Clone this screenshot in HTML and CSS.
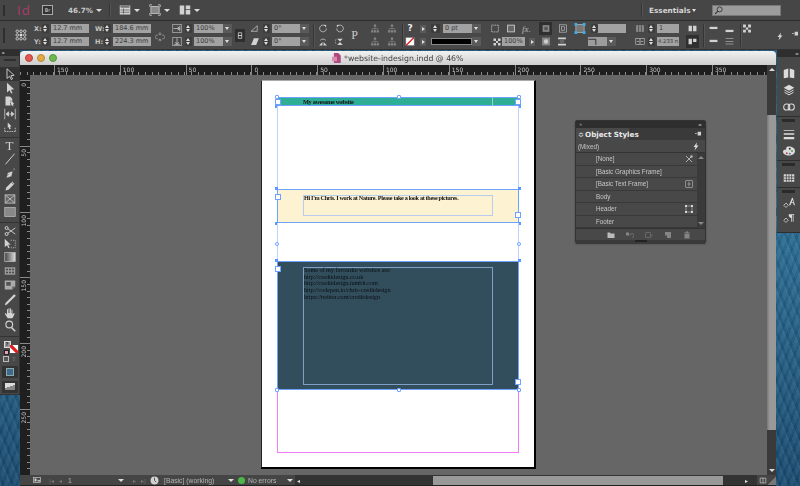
FILE: index.html
```html
<!DOCTYPE html>
<html lang="en">
<head>
    <meta charset="UTF-8">
    <title>*website-indesign.indd @ 46%</title>
    <link rel="stylesheet" href="styles.css">
</head>
<body>
    <svg class="defs" width="0" height="0">
        <symbol id="i-select" viewBox="0 0 16 16"><path d="M4 1v13l3.400-3 2.200 4.400 1.800-.9-2.200-4.300 4.300-.4z" fill="none" stroke="currentColor" stroke-width="1.200"/></symbol>
        <symbol id="i-direct" viewBox="0 0 16 16"><path d="M4 1v13l3.400-3 2.200 4.400 1.800-.9-2.200-4.300 4.300-.4z" fill="currentColor"/></symbol>
        <symbol id="i-page" viewBox="0 0 16 16"><path d="M2 2h6l3 3v5l-3 1 1 3H2z" fill="currentColor"/><path d="M9 7l5 5-2 .5 1 2-1.500.7-1-2-1.500 1z" fill="#ddd" stroke="#444" stroke-width=".5"/></symbol>
        <symbol id="i-gap" viewBox="0 0 16 16"><path d="M1 1v14M15 1v14M3 8h10M3 8l3-3v6zM13 8l-3-3v6z" fill="currentColor" stroke="currentColor"/></symbol>
        <symbol id="i-collect" viewBox="0 0 16 16"><path d="M1 14h14M1 14V9M15 14V9" fill="none" stroke="currentColor" stroke-dasharray="2 1"/><path d="M5 2l5 5-2 .5 1 3-2 .5-1-3-1 1z" fill="currentColor"/></symbol>
        <symbol id="i-line" viewBox="0 0 16 16"><path d="M2 15L14 1" stroke="currentColor" stroke-width="1.300"/></symbol>
        <symbol id="i-pen" viewBox="0 0 16 16"><path d="M13 1l2 2-3 1.500-2 8-7 2 2-7 8-2.500zM3 13l4-4" fill="currentColor" stroke="#444" stroke-width=".5"/></symbol>
        <symbol id="i-pencil" viewBox="0 0 16 16"><path d="M2 14l1-4 8-8 3 3-8 8z" fill="currentColor"/><path d="M10 3l3 3" stroke="#444"/></symbol>
        <symbol id="i-frame" viewBox="0 0 16 16"><rect x="1.500" y="2.500" width="13" height="11" fill="#666" stroke="currentColor"/><path d="M2 3l12 10M14 3L2 13" stroke="currentColor"/></symbol>
        <symbol id="i-rect" viewBox="0 0 16 16"><rect x="1" y="2" width="14" height="12" fill="#888" stroke="#bbb"/></symbol>
        <symbol id="i-scissors" viewBox="0 0 16 16"><circle cx="3.500" cy="4" r="2" fill="none" stroke="currentColor" stroke-width="1.300"/><circle cx="3.500" cy="12" r="2" fill="none" stroke="currentColor" stroke-width="1.300"/><path d="M5 5l10 7M5 11L15 4" stroke="currentColor" stroke-width="1.200"/></symbol>
        <symbol id="i-free" viewBox="0 0 16 16"><path d="M1 1v11l3-2.500 2 4 1.500-.8-2-4L9 9z" fill="currentColor"/><path d="M9 3h6M15 3v10M9 13h6" stroke="currentColor" stroke-dasharray="1.500 1.500"/></symbol>
        <symbol id="i-gradient" viewBox="0 0 16 16"><defs><linearGradient id="grad"><stop offset="0" stop-color="#444"/><stop offset="1" stop-color="#ddd"/></linearGradient></defs><rect x="1" y="2" width="14" height="12" fill="url(#grad)" stroke="#bbb"/></symbol>
        <symbol id="i-feather" viewBox="0 0 16 16"><rect x="1" y="3" width="14" height="10" fill="#999"/><path d="M3 6h2M7 6h2M11 6h2M3 10h2M7 10h2M11 10h2" stroke="#333" stroke-width="2"/></symbol>
        <symbol id="i-note" viewBox="0 0 16 16"><path d="M1 2h14v8l-4 4H1z" fill="#aaa"/><path d="M11 14v-4h4" fill="#666"/><rect x="3" y="4" width="6" height="5" fill="#555"/></symbol>
        <symbol id="i-drop" viewBox="0 0 16 16"><path d="M15 1c-1-1-3 0-4 2L2 12l-1 3 3-1 9-9c2-1 3-3 2-4z" fill="currentColor"/></symbol>
        <symbol id="i-hand" viewBox="0 0 16 16"><path d="M5 15L1 9l1-1 2 2V3h1.300v5H6V1.500h1.300V8H8V2h1.300v6h.7V3.500h1.300V10l2-2 1 1-3 6z" fill="currentColor"/></symbol>
        <symbol id="i-zoom" viewBox="0 0 16 16"><circle cx="7" cy="6" r="4.500" fill="none" stroke="currentColor" stroke-width="1.500"/><path d="M10 10l5 5" stroke="currentColor" stroke-width="2"/></symbol>
        <symbol id="i-pages" viewBox="0 0 16 16"><path d="M1 4l6-2v12l-6 1zM9 2l6 2v11l-6-1z" fill="currentColor"/></symbol>
        <symbol id="i-layers" viewBox="0 0 16 16"><path d="M8 1l7 4-7 4-7-4z" fill="currentColor"/><path d="M2 8l6 3.500L14 8M2 11l6 3.500 6-3.500" fill="none" stroke="currentColor" stroke-width="1.300"/></symbol>
        <symbol id="i-links" viewBox="0 0 16 16"><rect x="1" y="4" width="8" height="8" rx="3.500" fill="none" stroke="currentColor" stroke-width="1.400"/><rect x="7" y="4" width="8" height="8" rx="3.500" fill="none" stroke="currentColor" stroke-width="1.400"/></symbol>
        <symbol id="i-strokes" viewBox="0 0 16 16"><path d="M1 3h14v1H1zM1 7h14v2H1zM1 12h14v3H1z" fill="currentColor"/></symbol>
        <symbol id="i-palette" viewBox="0 0 16 16"><path d="M8 2c4 0 8 2 8 6s-4 6-8 6-8-2-8-5 3-2 4-3-1-4 4-4z" fill="currentColor"/><circle cx="5" cy="11" r="1.300" fill="#b44"/><circle cx="9" cy="11.500" r="1.300" fill="#47a"/><circle cx="12" cy="8" r="1.300" fill="#4a4"/><circle cx="9" cy="5" r="1.300" fill="#333"/></symbol>
        <symbol id="i-table" viewBox="0 0 16 16"><path fill="currentColor" d="M1 3h14v10H1z"/><path d="M1 6.500h14M1 9.800h14M4.500 3v10M8 3v10M11.500 3v10" stroke="#333" stroke-width=".9"/></symbol>
        <symbol id="i-charst" viewBox="0 0 16 16"><path d="M1 11l3-3 3 3-3 3z" fill="none" stroke="currentColor"/><path d="M8 11l4-10h1l3 10h-1.500l-1-3H11l-1 3zM11.500 7H14l-1-3.500z" fill="currentColor"/></symbol>
        <symbol id="i-parast" viewBox="0 0 16 16"><path d="M1 11l3-3 3 3-3 3z" fill="none" stroke="currentColor"/><path d="M8 3h7v1h-1v9h-1V4h-1v9h-1V8C8 8 7 3 8 3z" fill="currentColor"/></symbol>
        <symbol id="i-view" viewBox="0 0 16 16"><rect x="1" y="2" width="14" height="12" fill="currentColor"/><rect x="2" y="2" width="12" height="3" fill="#777"/><path d="M6 6v7M2 8h12M2 11h12" stroke="#555"/></symbol>
        <symbol id="i-screen" viewBox="0 0 16 16"><rect x="2.500" y="3.500" width="11" height="9" fill="#888" stroke="currentColor"/><path d="M1 1h3M1 1v3M15 1h-3M15 1v3M1 15h3M1 15v-3M15 15h-3M15 15v-3" stroke="currentColor" fill="none"/></symbol>
        <symbol id="i-arrange" viewBox="0 0 16 16"><path d="M1 2h6v12H1zM9 2h6v5H9zM9 8h6v6H9z" fill="currentColor"/></symbol>
        <symbol id="i-ref" viewBox="0 0 16 16"><g fill="none" stroke="currentColor" stroke-width="1.200"><circle cx="3" cy="3" r="1.700"/><circle cx="8" cy="3" r="1.700"/><circle cx="13" cy="3" r="1.700"/><circle cx="3" cy="8" r="1.700"/><circle cx="13" cy="8" r="1.700"/><circle cx="3" cy="13" r="1.700"/><circle cx="8" cy="13" r="1.700"/><circle cx="13" cy="13" r="1.700"/></g><circle cx="8" cy="8" r="2" fill="#ddd"/></symbol>
        <symbol id="i-linkv" viewBox="0 0 16 16"><path d="M8 1l2 2-2 2-2-2zM8 11l2 2-2 2-2-2zM4 5a4 3 0 0 0 0 6M12 5a4 3 0 0 1 0 6" fill="none" stroke="currentColor" stroke-width="1.200" stroke-dasharray="2 1"/></symbol>
        <symbol id="i-scalex" viewBox="0 0 16 16"><rect x=".5" y=".5" width="15" height="15" fill="none" stroke="currentColor"/><path d="M2 8h10M9 5l4 3-4 3M13 3v10" fill="none" stroke="currentColor" stroke-width="1.300"/></symbol>
        <symbol id="i-scaley" viewBox="0 0 16 16"><rect x=".5" y=".5" width="15" height="15" fill="none" stroke="currentColor"/><path d="M8 2v10M5 9l3 4 3-4M3 13h10" fill="none" stroke="currentColor" stroke-width="1.300"/></symbol>
        <symbol id="i-chain" viewBox="0 0 16 16"><path d="M5 3h6v5H5zM5 8h6v5H5z" fill="none" stroke="#ddd" stroke-width="1.300"/></symbol>
        <symbol id="i-angle" viewBox="0 0 16 16"><path d="M1 13L12 3v10z" fill="none" stroke="currentColor" stroke-width="1.200"/></symbol>
        <symbol id="i-shear" viewBox="0 0 16 16"><path d="M1 14L6 2h9l-5 12z" fill="currentColor"/></symbol>
        <symbol id="i-rotcw" viewBox="0 0 16 16"><path d="M12 3.500a6 6 0 1 0 2 4.500" fill="none" stroke="currentColor" stroke-width="1.300"/><path d="M10 1l4 1-1 4z" fill="currentColor"/></symbol>
        <symbol id="i-rotccw" viewBox="0 0 16 16"><path d="M4 3.500a6 6 0 1 1-2 4.500" fill="none" stroke="currentColor" stroke-width="1.300"/><path d="M6 1L2 2l1 4z" fill="currentColor"/></symbol>
        <symbol id="i-fliph" viewBox="0 0 16 16"><path d="M3 6a6 5 0 0 1 10 0" fill="none" stroke="currentColor" stroke-width="1.300"/><path d="M1 15l6-6v6zM15 15L9 9v6z" fill="currentColor"/></symbol>
        <symbol id="i-flipv" viewBox="0 0 16 16"><path d="M3 3h10l-5 5zM3 14h10L8 9z" fill="currentColor"/><path d="M1 4a8 6 0 0 0 0 8" fill="none" stroke="currentColor"/></symbol>
        <symbol id="i-tree" viewBox="0 0 16 16"><path d="M6 1h4v4H6zM1 11h4v4H1zM6 11h4v4H6zM11 11h4v4h-4z" fill="currentColor"/><path d="M8 5v6M3 11V8h10v3" fill="none" stroke="currentColor"/></symbol>
        <symbol id="i-none" viewBox="0 0 16 16"><rect width="16" height="16" fill="#fff"/><path d="M1 15L15 1" stroke="#d22" stroke-width="2.500"/><rect x=".5" y=".5" width="15" height="15" fill="none" stroke="#333"/></symbol>
        <symbol id="i-dashed" viewBox="0 0 16 16"><rect x="2" y="2" width="12" height="12" fill="none" stroke="currentColor" stroke-width="1.300" stroke-dasharray="2 1"/></symbol>
        <symbol id="i-square" viewBox="0 0 16 16"><rect x="2" y="2" width="12" height="12" fill="#666" stroke="currentColor" stroke-width="1.500"/></symbol>
        <symbol id="i-check" viewBox="0 0 16 16"><path d="M1 1h5v5H1zM10 1h5v5h-5zM6 6h4v4H6zM1 10h5v5H1zM10 10h5v5h-5z" fill="currentColor"/></symbol>
        <symbol id="i-wrap" viewBox="0 0 16 16"><rect x="2" y="2" width="12" height="12" fill="#888"/><rect x="5" y="5" width="6" height="6" fill="#555"/></symbol>
        <symbol id="i-wrap2" viewBox="0 0 16 16"><rect x="1.500" y="1.500" width="13" height="13" fill="none" stroke="currentColor"/><rect x="5" y="5" width="6" height="6" fill="none" stroke="currentColor"/></symbol>
        <symbol id="i-circ" viewBox="0 0 16 16"><rect x="1" y="1" width="14" height="14" fill="#888"/><circle cx="8" cy="8" r="4" fill="#ccc"/></symbol>
        <symbol id="i-jump" viewBox="0 0 16 16"><path d="M1 1h14v3H1zM1 12h14v3H1z" fill="currentColor"/><path d="M4 5h8v6H4z" fill="#666"/></symbol>
        <symbol id="i-fit" viewBox="0 0 16 16"><rect x="2" y="2" width="12" height="12" fill="#777" stroke="#bbb"/><path d="M0 0h4v4H0zM12 0h4v4h-4zM0 12h4v4H0zM12 12h4v4h-4z" fill="#3ab0e8"/></symbol>
        <symbol id="i-corner" viewBox="0 0 16 16"><path d="M0 4h13v10" fill="none" stroke="#222" stroke-width="1.500"/></symbol>
        <symbol id="i-cols" viewBox="0 0 16 16"><rect x="1" y="2" width="14" height="12" fill="#888"/><path d="M5.500 2v12M10.500 2v12" stroke="#444" stroke-width="1.300"/></symbol>
        <symbol id="i-gutter" viewBox="0 0 16 16"><rect x=".5" y="2.500" width="15" height="11" fill="none" stroke="currentColor"/><path d="M3 8h3M10 8h3M8 3v10" stroke="currentColor" stroke-width="1.300"/></symbol>
        <symbol id="i-twocol" viewBox="0 0 16 16"><path d="M1 3h6v10H1zM9 3h6v10H9z" fill="currentColor"/></symbol>
        <symbol id="i-widecol" viewBox="0 0 16 16"><path d="M1 3h6v10H1zM9 3h6v6H9z" fill="currentColor"/></symbol>
        <symbol id="i-bar" viewBox="0 0 16 16"><path d="M1 5h14v4H1z" fill="currentColor"/></symbol>
        <symbol id="i-lines" viewBox="0 0 16 16"><path d="M1 2h14v1H1zM1 7h14v1H1zM1 12h14v1H1z" fill="currentColor"/></symbol>
        <symbol id="i-bolt" viewBox="0 0 16 16"><path d="M10 0L3 9h4l-2 7 8-10H9z" fill="currentColor"/></symbol>
        <symbol id="i-menu" viewBox="0 0 16 16"><path d="M0 6h5v2H0zM7 2h9v10H7z" fill="currentColor"/></symbol>
        <symbol id="i-obj-none" viewBox="0 0 16 16"><path d="M2 2l12 12M2 14L12 4" stroke="currentColor" stroke-width="1.500"/><path d="M11 1h4v4h-4z" fill="currentColor"/></symbol>
        <symbol id="i-obj-text" viewBox="0 0 16 16"><rect x="1.500" y="1.500" width="13" height="13" fill="none" stroke="currentColor"/><path d="M8 3v10M5 8h6" stroke="currentColor"/></symbol>
        <symbol id="i-obj-frame" viewBox="0 0 16 16"><rect x="2" y="2" width="12" height="12" fill="none" stroke="currentColor"/><path d="M0 0h4v4H0zM12 0h4v4h-4zM0 12h4v4H0zM12 12h4v4h-4z" fill="currentColor"/></symbol>
        <symbol id="i-folder" viewBox="0 0 16 16"><path d="M1 3h5l1 2h8v9H1z" fill="currentColor"/></symbol>
        <symbol id="i-clear" viewBox="0 0 16 16"><path d="M0 3h6v6H0z" fill="currentColor"/><path d="M8 9a4 4 0 1 1 4 4" fill="none" stroke="currentColor" stroke-width="1.300"/></symbol>
        <symbol id="i-newattr" viewBox="0 0 16 16"><rect x="1.500" y="3.500" width="9" height="9" fill="none" stroke="currentColor"/><path d="M12 11l3-4" stroke="currentColor" stroke-width="1.300"/></symbol>
        <symbol id="i-newdoc" viewBox="0 0 16 16"><path d="M2 2h12v12H6V9H2z" fill="currentColor"/></symbol>
        <symbol id="i-trash" viewBox="0 0 16 16"><path d="M2 3h12v1H2zM6 1h4v2H6zM3 5h10v10H3z" fill="currentColor"/></symbol>
        <symbol id="i-preview" viewBox="0 0 16 16"><rect x="1" y="3" width="14" height="10" fill="none" stroke="currentColor" stroke-width="1.300"/><rect x="3" y="5" width="4" height="6" fill="currentColor"/><path d="M9 7l3 2 2-2v4H9z" fill="currentColor"/></symbol>
        <symbol id="i-clock" viewBox="0 0 16 16"><circle cx="8" cy="8" r="7" fill="currentColor"/><path d="M8 3v5l3 3" stroke="#444" stroke-width="1.500" fill="none"/></symbol>
        <symbol id="i-split" viewBox="0 0 16 16"><path d="M1.500 2.500h13v11h-13zM8 2.500v11" fill="none" stroke="currentColor" stroke-width="1.500"/></symbol>
        <symbol id="i-doc" viewBox="0 0 16 16"><path d="M3 0h7l4 4v12H3z" fill="#b04a7e"/><path d="M0 6h8v7H0z" fill="#d88ab0"/></symbol>
        <symbol id="i-search" viewBox="0 0 16 16"><circle cx="10" cy="6" r="4.500" fill="none" stroke="#333" stroke-width="1.500"/><path d="M7 9l-5 5" stroke="#333" stroke-width="2"/></symbol>
    </svg>

    <div class="app">
        <header class="appbar">
            <span class="grip grip-app"></span>
            <span class="logo">Id</span>
            <span class="bridge">Br</span>
            <span class="zoomval">46.7%</span>
            <span class="tri tri-zoom"></span>
            <span class="vline vline-app"></span>
            <svg class="ic-app ic-app-first"><use href="#i-view"/></svg><span class="tri"></span>
            <svg class="ic-app"><use href="#i-screen"/></svg><span class="tri"></span>
            <svg class="ic-app"><use href="#i-arrange"/></svg><span class="tri"></span>
            <span class="vline vline-ess"></span>
            <span class="essentials">Essentials</span>
            <span class="tri tri-ess"></span>
            <span class="searchbox"><svg class="ic"><use href="#i-search"/></svg></span>
        </header>

        <div class="ctl">
            <span class="grip grip-ctl"></span>
            <svg class="refpoint"><use href="#i-ref"/></svg>

            <div class="g g-xy">
                <div class="row"><span class="lbl">X:</span><span class="spin"></span><span class="inp w38">12.7 mm</span></div>
                <div class="row"><span class="lbl">Y:</span><span class="spin"></span><span class="inp w38">12.7 mm</span></div>
            </div>
            <div class="g g-wh">
                <div class="row"><span class="lbl">W:</span><span class="spin"></span><span class="inp w38">184.6 mm</span></div>
                <div class="row"><span class="lbl">H:</span><span class="spin"></span><span class="inp w38">224.3 mm</span></div>
            </div>
            <svg class="linkv"><use href="#i-linkv"/></svg>

            <div class="g g-scale">
                <div class="row"><svg class="ic"><use href="#i-scalex"/></svg><span class="spin spin-gap"></span><span class="inp w29">100%</span><span class="dropbtn"></span></div>
                <div class="row"><svg class="ic"><use href="#i-scaley"/></svg><span class="spin spin-gap"></span><span class="inp w29">100%</span><span class="dropbtn"></span></div>
            </div>
            <span class="chain"><svg class="ic"><use href="#i-chain"/></svg></span>
            <div class="g g-angle">
                <div class="row"><svg class="ic"><use href="#i-angle"/></svg><span class="spin spin-gap"></span><span class="inp w28">0°</span><span class="dropbtn"></span></div>
                <div class="row"><svg class="ic"><use href="#i-shear"/></svg><span class="spin spin-gap"></span><span class="inp w28">0°</span><span class="dropbtn"></span></div>
            </div>
            <span class="vline vline-ctl"></span>

            <div class="g g-icons g-rot">
                <div class="row"><svg class="ic"><use href="#i-rotcw"/></svg><svg class="ic"><use href="#i-rotccw"/></svg></div>
                <div class="row"><svg class="ic"><use href="#i-fliph"/></svg><svg class="ic"><use href="#i-flipv"/></svg></div>
            </div>
            <span class="pbox">P</span>
            <div class="g g-icons g-org">
                <div class="row"><svg class="ic dim"><use href="#i-tree"/></svg><svg class="ic dim"><use href="#i-tree"/></svg></div>
                <div class="row"><svg class="ic dim"><use href="#i-tree"/></svg><svg class="ic dim"><use href="#i-tree"/></svg></div>
            </div>
            <span class="vline vline-stroke"></span>

            <div class="g g-fillst">
                <div class="row"><span class="qmark">?</span><span class="arrowbtn"></span></div>
                <div class="row"><svg class="ic"><use href="#i-none"/></svg><span class="arrowbtn"></span></div>
            </div>
            <div class="g g-stroke">
                <div class="row"><span class="spin"></span><span class="inp w30">0 pt</span><span class="dropbtn"></span></div>
                <div class="row"><span class="strokebar"></span><span class="dropbtn"></span></div>
            </div>
            <div class="g g-fx">
                <div class="row"><svg class="ic"><use href="#i-dashed"/></svg><svg class="ic"><use href="#i-square"/></svg><span class="fx">fx.</span></div>
                <div class="row"><svg class="ic ic-small"><use href="#i-check"/></svg><span class="inp w23">100%</span><span class="arrowbtn"></span></div>
            </div>
            <div class="g g-wrap">
                <div class="row"><span class="pressed"><svg class="ic"><use href="#i-wrap"/></svg></span><svg class="ic"><use href="#i-wrap2"/></svg></div>
                <div class="row"><svg class="ic ic-in"><use href="#i-circ"/></svg><svg class="ic"><use href="#i-jump"/></svg></div>
            </div>
            <div class="g g-fit">
                <div class="row"><svg class="fiticon"><use href="#i-fit"/></svg><span class="spin"></span><span class="inp w29">&nbsp;</span></div>
                <div class="row"><span class="cornerbox"><svg class="ic"><use href="#i-corner"/></svg></span><span class="dropbtn"></span></div>
            </div>
            <div class="g g-cols">
                <div class="row"><svg class="ic"><use href="#i-cols"/></svg><span class="spin spin-gap"></span><span class="inp w22">1</span></div>
                <div class="row"><svg class="ic"><use href="#i-gutter"/></svg><span class="spin spin-gap"></span><span class="inp w22 inp-tiny">4.233 n</span></div>
            </div>
            <div class="g g-flow">
                <div class="row"><svg class="ic"><use href="#i-twocol"/></svg></div>
                <div class="row"><span class="pressed"><svg class="ic"><use href="#i-widecol"/></svg></span></div>
            </div>
            <span class="vline vline-al"></span>
            <div class="g g-align">
                <div class="row"><svg class="ic"><use href="#i-bar"/></svg></div>
                <div class="row"><svg class="ic"><use href="#i-bar"/></svg></div>
            </div>
            <div class="g g-align2">
                <div class="row row-low"><svg class="ic"><use href="#i-bar"/></svg></div>
                <div class="row"><svg class="ic"><use href="#i-lines"/></svg></div>
            </div>
            <span class="vline vline-al2"></span>
            <svg class="ic cell"><use href="#i-check"/></svg>
            <svg class="bolt"><use href="#i-bolt"/></svg>
            <svg class="panelmenu"><use href="#i-menu"/></svg>
        </div>

        <div class="workspace">
            <aside class="tools">
                <div class="tools-head">▸▸</div>
                <span class="tools-grip"></span>
                <div class="tool tool-on"><svg><use href="#i-select"/></svg></div>
                <div class="tool"><svg><use href="#i-direct"/></svg></div>
                <div class="tool"><svg><use href="#i-page"/></svg></div>
                <div class="tool"><svg><use href="#i-gap"/></svg></div>
                <div class="tool tool-end"><svg><use href="#i-collect"/></svg></div>
                <div class="tool tool-t">T</div>
                <div class="tool"><svg><use href="#i-line"/></svg></div>
                <div class="tool"><svg><use href="#i-pen"/></svg></div>
                <div class="tool"><svg><use href="#i-pencil"/></svg></div>
                <div class="tool"><svg><use href="#i-frame"/></svg></div>
                <div class="tool tool-end"><svg><use href="#i-rect"/></svg></div>
                <div class="tool"><svg><use href="#i-scissors"/></svg></div>
                <div class="tool"><svg><use href="#i-free"/></svg></div>
                <div class="tool"><svg><use href="#i-gradient"/></svg></div>
                <div class="tool"><svg><use href="#i-feather"/></svg></div>
                <div class="tool tool-gap"><svg><use href="#i-note"/></svg></div>
                <div class="tool"><svg><use href="#i-drop"/></svg></div>
                <div class="tool"><svg><use href="#i-hand"/></svg></div>
                <div class="tool tool-end"><svg><use href="#i-zoom"/></svg></div>
                <div class="fillstroke">
                    <span class="fs-fill">?</span>
                    <span class="fs-swap"></span>
                    <span class="fs-def"></span>
                </div>
                <div class="modes"><span class="mode-box"></span><span class="mode-t">T</span></div>
                <div class="applybox"><span class="applyfill"></span></div>
                <div class="viewbox"><span class="viewicon"></span></div>
            </aside>

            <main class="docwin">
                <div class="titlebar">
                    <span class="light light-red"></span>
                    <span class="light light-yellow"></span>
                    <span class="light light-green"></span>
                    <span class="doctitle"><svg class="docicon"><use href="#i-doc"/></svg>*website-indesign.indd @ 46%</span>
                </div>

                <div class="toprow">
                    <div class="hruler">
                        <span class="rcorner"></span>
                        <span class="hcell">150</span><span class="hcell">100</span><span class="hcell">50</span><span class="hcell">0</span><span class="hcell">50</span><span class="hcell">100</span><span class="hcell">150</span><span class="hcell">200</span><span class="hcell">250</span><span class="hcell">300</span><span class="hcell">350</span>
                    </div>
                    <div class="vscroll-head"><span class="tri tri-up"></span></div>
                </div>

                <div class="midrow">
                    <div class="vruler">
                        <span class="vcell"><b>0</b></span><span class="vcell"><b>50</b></span><span class="vcell"><b>100</b></span><span class="vcell"><b>150</b></span><span class="vcell"><b>200</b></span><span class="vcell"><b>250</b></span>
                    </div>

                    <div class="canvas">
                        <div class="page">
                            <div class="frame frame-teal">
                                <span class="inner inner-teal">My awesome website</span>
                                <i class="h h-sq h-tl"></i><i class="h h-sq h-tm"></i><i class="h h-sq h-tr"></i>
                                <i class="h h-port h-pl"></i><i class="h h-port h-pr"></i>
                                <i class="h h-dot h-bl"></i><i class="h h-dot h-br"></i>
                            </div>
                            <div class="spacer spacer-1"></div>
                            <div class="frame frame-cream">
                                <div class="inner inner-cream">Hi I'm Chris. I work at Nature. Please take a look at these pictures.</div>
                                <i class="h h-dot h-tl"></i><i class="h h-dot h-tr"></i>
                                <i class="h h-dot h-bl"></i><i class="h h-dot h-br"></i>
                                <i class="h h-in h-cream-in"></i><i class="h h-in h-cream-out"></i>
                            </div>
                            <div class="spacer spacer-2">
                                <i class="h h-sq h-bl2"></i><i class="h h-sq h-br2"></i>
                            </div>
                            <div class="frame frame-dark">
                                <div class="inner inner-dark">
                                    <p>Some of my favourite websites are:</p>
                                    <p>http://creditdesign.co.uk</p>
                                    <p>http://creditdesign.tumblr.com</p>
                                    <p>http://codepen.io/chris-creditdesign</p>
                                    <p>https://twitter.com/creditdesign</p>
                                </div>
                                <i class="h h-dot h-tl"></i><i class="h h-dot h-tr"></i>
                                <i class="h h-in h-dark-in"></i><i class="h h-big h-dark-out"></i>
                                <i class="h h-sq h-bl"></i><i class="h h-sq h-bm"></i><i class="h h-sq h-br"></i>
                            </div>
                            <div class="frame-pink"></div>
                        </div>

                        <section class="panel">
                            <div class="panel-top"><span>✕</span><span>◂▸</span></div>
                            <div class="panel-tabs">
                                <div class="panel-tab"><span class="updown">≎</span>Object Styles</div>
                                <svg class="panel-menu"><use href="#i-menu"/></svg>
                            </div>
                            <div class="panel-mixed"><span>(Mixed)</span><svg class="bolt-small"><use href="#i-bolt"/></svg></div>
                            <div class="panel-list">
                                <ul class="styles">
                                    <li>[None]<svg><use href="#i-obj-none"/></svg></li>
                                    <li>[Basic Graphics Frame]</li>
                                    <li>[Basic Text Frame]<svg><use href="#i-obj-text"/></svg></li>
                                    <li>Body</li>
                                    <li>Header<svg><use href="#i-obj-frame"/></svg></li>
                                    <li>Footer</li>
                                </ul>
                                <div class="panel-scroll"><span class="tri tri-up tri-dim"></span><span class="tri tri-dim"></span></div>
                            </div>
                            <div class="panel-foot">
                                <svg class="pf-folder"><use href="#i-folder"/></svg>
                                <svg class="dim"><use href="#i-clear"/></svg>
                                <svg class="dim"><use href="#i-newattr"/></svg>
                                <svg class="dim"><use href="#i-newdoc"/></svg>
                                <svg class="dim"><use href="#i-trash"/></svg>
                            </div>
                            <div class="panel-grip"><span></span></div>
                        </section>
                    </div>

                    <div class="vscroll">
                        <span class="vthumb"></span>
                        <span class="tri tri-vend"></span>
                    </div>
                </div>

                <footer class="status">
                    <svg class="st-preview"><use href="#i-preview"/></svg>
                    <span class="st-nav">|◂</span><span class="st-nav">◂</span>
                    <span class="st-page">1</span>
                    <span class="tri tri-page"></span>
                    <span class="st-nav">▸</span><span class="st-nav">▸|</span>
                    <svg class="st-clock"><use href="#i-clock"/></svg>
                    <span class="st-prof">[Basic] (working)</span>
                    <span class="tri tri-prof"></span>
                    <span class="st-dot"></span>
                    <span class="st-err">No errors</span>
                    <span class="tri tri-err"></span>
                    <div class="hscroll">
                        <span class="st-left">◂</span>
                        <span class="hthumb"></span>
                        <span class="st-right">▸</span>
                    </div>
                    <svg class="st-split"><use href="#i-split"/></svg>
                    <span class="st-resize"></span>
                </footer>
            </main>

            <aside class="dock">
                <div class="dock-head">◂▸</div>
                <div class="dock-group dock-g1">
                    <svg><use href="#i-pages"/></svg>
                    <svg><use href="#i-layers"/></svg>
                    <svg><use href="#i-links"/></svg>
                </div>
                <div class="dock-group">
                    <span class="dock-bar"></span>
                    <svg><use href="#i-strokes"/></svg>
                    <svg><use href="#i-palette"/></svg>
                </div>
                <div class="dock-group">
                    <span class="dock-bar"></span>
                    <svg><use href="#i-table"/></svg>
                </div>
                <div class="dock-group dock-g4">
                    <span class="dock-bar"></span>
                    <svg><use href="#i-charst"/></svg>
                    <svg><use href="#i-parast"/></svg>
                </div>
            </aside>
        </div>
    </div>
</body>
</html>
```

FILE: styles.css
```css
* { box-sizing: border-box; }
html, body { margin: 0; height: 100%; }
body {
    overflow: hidden;
    font-family: "DejaVu Sans", sans-serif;
    background-color: #1d587f;
    background-image:
        repeating-linear-gradient(68deg, rgba(255,255,255,.05) 0 2px, rgba(0,0,0,.07) 2px 5px, rgba(255,255,255,.02) 5px 9px),
        repeating-linear-gradient(112deg, rgba(0,0,0,.06) 0 3px, rgba(255,255,255,.03) 3px 7px),
        linear-gradient(180deg, #1c5378 0%, #2a6c93 50%, #1b4d72 100%);
    color: #ccc;
}
.defs { position: absolute; }
/* the reference is a soft, scaled down capture */
.app { display: flex; flex-direction: column; height: 486px; filter: blur(.3px); }
svg { display: block; color: #d2d2d2; flex: none; }
.dim { color: #858585; }

/* shared little bits */
.tri {
    flex: none;
    width: 0;
    height: 0;
    margin-left: 3px;
    border-left: 3px solid transparent;
    border-right: 3px solid transparent;
    border-top: 3px solid #ddd;
}
.tri-up { border-top: 0; border-bottom: 3px solid #ddd; }
.tri-dim { border-top-color: #888; border-bottom-color: #888; }
.vline { flex: none; width: 1px; background: #353535; box-shadow: 1px 0 0 #555; }
.grip { flex: none; width: 2px; background: #2e2e2e; }

/* app bar */
.appbar {
    display: flex;
    align-items: center;
    height: 21px;
    background: #464646;
    border-bottom: 1px solid #2d2d2d;
    flex: none;
}
.grip-app { height: 11px; margin-left: 3px; }
.logo { margin-left: 12px; width: 25px; color: #b03a68; font: 13px "Open Sans", sans-serif; letter-spacing: 1px; }
.bridge {
    width: 11px;
    height: 10px;
    background: #333;
    border: 1px solid #aaa;
    color: #ddd;
    font-size: 5px;
    line-height: 8px;
    text-align: center;
}
.zoomval { margin-left: 15px; width: 28px; color: #c9c9c9; font-size: 7.2px; font-weight: bold; }
.tri-zoom { margin-left: 0; }
.vline-app { height: 14px; margin-left: 7px; }
.ic-app { width: 12px; height: 12px; margin-left: 9px; }
.ic-app-first { margin-left: 9px; }
.vline-ess { height: 14px; margin-left: 441px; }
.essentials { margin-left: 7px; width: 41px; color: #d6d6d6; font-size: 7.3px; font-weight: bold; white-space: nowrap; }
.tri-ess { margin-left: 2px; border-left-width: 2px; border-right-width: 2px; }
.searchbox {
    display: flex;
    align-items: center;
    width: 69px;
    height: 11px;
    margin-left: 16px;
    padding-left: 1px;
    background: #9c9c9c;
    border: 1px solid #777;
}
.searchbox .ic { width: 9px; height: 9px; }

/* control bar */
.ctl {
    display: flex;
    align-items: flex-start;
    flex: none;
    height: 29px;
    padding-top: 3px;
    background: #484848;
    border-bottom: 1px solid #333;
    font-size: 6.5px;
}
.g { display: flex; flex-direction: column; gap: 4px; flex: none; }
.row { display: flex; align-items: center; height: 9px; }
.lbl { width: 9px; color: #c4c4c4; font-size: 6.5px; font-weight: bold; }
.spin {
    position: relative;
    flex: none;
    width: 7px;
    height: 9px;
    margin-right: 2px;
    background: #3c3c3c;
    border-radius: 1px;
}
.spin::before, .spin::after {
    content: "";
    position: absolute;
    left: 1px;
    border-left: 2.5px solid transparent;
    border-right: 2.5px solid transparent;
}
.spin::before { top: 1px; border-bottom: 3px solid #ddd; }
.spin::after { bottom: 1px; border-top: 3px solid #ddd; }
.spin-gap { margin-left: 3px; }
.inp {
    flex: none;
    height: 9px;
    padding-left: 2px;
    background: #a2a2a2;
    color: #3c3c3c;
    font-size: 6.5px;
    line-height: 9px;
    white-space: nowrap;
    overflow: hidden;
}
.inp-tiny { padding-left: 1px; font-size: 5.3px; }
.w38 { width: 38px; }
.w30 { width: 29px; }
.w29 { width: 29px; }
.w28 { width: 28px; }
.w23 { width: 23px; }
.w22 { width: 22px; }
.ic { width: 10px; height: 9px; }
.dropbtn {
    position: relative;
    flex: none;
    width: 9px;
    height: 9px;
    background: #5a5a5a;
}
.dropbtn::after {
    content: "";
    position: absolute;
    left: 2px;
    top: 3px;
    border-left: 2.5px solid transparent;
    border-right: 2.5px solid transparent;
    border-top: 3px solid #ddd;
}
.arrowbtn {
    position: relative;
    flex: none;
    width: 6px;
    height: 8px;
    margin-left: 5px;
    background: #5a5a5a;
}
.arrowbtn::after {
    content: "";
    position: absolute;
    left: 2px;
    top: 2px;
    border-top: 2px solid transparent;
    border-bottom: 2px solid transparent;
    border-left: 3px solid #ddd;
}
.grip-ctl { height: 15px; margin: 4px 0 0 3px; }
.refpoint { width: 12px; height: 14px; margin: 4px 0 0 10px; }
.g-xy { margin-left: 7px; width: 55px; }
.g-wh { margin-left: 6px; width: 56px; }
.linkv { width: 10px; height: 10px; margin: 8px 0 0 4px; }
.g-scale { margin-left: 7px; width: 59px; }
.chain {
    display: flex;
    align-items: center;
    width: 10px;
    height: 13px;
    margin: 5px 0 0 4px;
    background: #2f2f2f;
}
.g-angle { margin-left: 5px; width: 57px; }
.vline-ctl { height: 23px; margin-left: 6px; }
.g-icons .row { gap: 7px; }
.g-rot { margin-left: 4px; width: 27px; }
.pbox {
    width: 15px;
    height: 19px;
    margin: 2px 0 0 2px;
    color: #ccc;
    font: 12px/18px "Liberation Serif", serif;
    text-align: center;
}
.g-org { margin-left: 8px; width: 27px; }
.vline-stroke { height: 23px; margin-left: 5px; }
.g-fillst { margin-left: 2px; width: 24px; }
.qmark {
    width: 10px;
    height: 9px;
    color: #eee;
    font-size: 9px;
    font-weight: bold;
    line-height: 9px;
    text-align: center;
}
.g-stroke { margin-left: 2px; width: 50px; }
.g-stroke .spin { width: 9px; margin-right: 3px; }
.g-stroke .spin::before, .g-stroke .spin::after { left: 2px; }
.strokebar { width: 41px; height: 7px; background: #000; border: 1px solid #888; }
.g-fx { margin-left: 9px; width: 46px; }
.g-fx .row { gap: 6px; }
.g-fx .row + .row { gap: 1px; padding-left: 3px; }
.g-fx .arrowbtn { margin-left: 3px; }
.ic-small { width: 8px; height: 8px; }
.fx { color: #bbb; font: italic 9px "Liberation Serif", serif; }
.g-wrap { margin-left: 3px; width: 33px; }
.g-wrap .row { gap: 6px; }
.pressed {
    display: flex;
    align-items: center;
    justify-content: center;
    width: 13px;
    height: 13px;
    background: #2f2f2f;
}
.ic-in { margin-left: 2px; }
.g-fit { margin-left: 2px; width: 52px; }
.fiticon { width: 12px; height: 11px; margin-right: 5px; }
.g-fit .spin { margin-right: -1px; }
.cornerbox {
    width: 19px;
    height: 9px;
    margin-left: 14px;
    background: #9c9c9c;
}
.g-cols { margin-left: 9px; width: 44px; }
.g-flow { margin-left: 7px; width: 14px; }
.g-flow .ic { width: 13px; }
.vline-al { height: 23px; margin-left: 3px; }
.g-align { margin-left: 3px; width: 13px; }
.g-align .ic, .g-align2 .ic { width: 13px; }
.g-align2 { margin-left: 3px; width: 13px; }
.row-low { padding-top: 6px; }
.vline-al2 { height: 23px; margin-left: 4px; }
.cell { width: 10px; height: 9px; margin-left: 1px; }
.bolt { width: 8px; height: 13px; margin: 6px 0 0 24px; }
.panelmenu { width: 10px; height: 6px; margin: 7px 0 0 6px; }

/* workspace */
.workspace { display: flex; flex: 1; min-height: 0; }

/* tools, left */
.tools {
    display: flex;
    flex-direction: column;
    align-items: center;
    align-self: flex-start;
    width: 20px;
    height: 345px;
    flex: none;
    background: #484848;
    border-right: 1px solid #333;
    border-bottom: 1px solid #333;
}
.tools-head {
    width: 100%;
    height: 6px;
    padding-left: 2px;
    background: #2e2e2e;
    color: #aaa;
    font-size: 4px;
    line-height: 6px;
    letter-spacing: -1px;
}
.tools-grip { width: 12px; height: 2px; margin: 3px 0 6px; background: #2e2e2e; }
.tool {
    display: flex;
    align-items: center;
    justify-content: center;
    flex: none;
    width: 100%;
    height: 13.2px;
}
.tool svg { width: 12px; height: 12px; }
.tool-on { background: #333; height: 14px; }
.tool-end { height: 17px; padding-bottom: 4px; border-bottom: 1px solid #333; margin-bottom: 2px; }
.tool-t { color: #d2d2d2; font: 13px "Liberation Serif", serif; }
.tool-gap { height: 16px; }
.fillstroke { position: relative; width: 16px; height: 15px; margin-top: 1px; flex: none; }
.fs-fill {
    position: absolute;
    left: 2px;
    top: 1px;
    width: 7px;
    height: 7px;
    background: #999;
    border: 1px solid #ddd;
    color: #222;
    font-size: 5px;
    font-weight: bold;
    line-height: 5px;
    text-align: center;
}
.fs-swap {
    position: absolute;
    left: 8px;
    top: 5px;
    width: 8px;
    height: 8px;
    background: linear-gradient(135deg, transparent 36%, #e02020 38% 62%, transparent 64%), #fff;
    transform: rotate(90deg);
}
.fs-def {
    position: absolute;
    left: 2px;
    top: 10px;
    width: 5px;
    height: 5px;
    background: #e8a0b8;
    border: 1px solid #222;
}
.modes { display: flex; gap: 3px; align-items: center; height: 9px; flex: none; }
.mode-box { width: 6px; height: 6px; border: 1px solid #bbb; background: #555; }
.mode-t { color: #777; font: 7px "Liberation Serif", serif; }
.applybox {
    display: flex;
    align-items: center;
    justify-content: center;
    width: 16px;
    height: 12px;
    margin-top: 2px;
    background: #333;
    flex: none;
}
.applyfill { width: 8px; height: 8px; background: #3f6a8c; border: 1px solid #8aa; }
.viewbox {
    display: flex;
    align-items: center;
    justify-content: center;
    width: 16px;
    height: 12px;
    margin-top: 3px;
    background: #333;
    flex: none;
}
.viewicon { width: 10px; height: 7px; background: linear-gradient(160deg, #ddd 50%, #888 50%); }

/* document window */
.docwin {
    display: flex;
    flex-direction: column;
    width: 756px;
    flex: none;
    margin-top: 1px;
}
.titlebar {
    display: flex;
    align-items: center;
    flex: none;
    height: 14px;
    padding-left: 5px;
    background: linear-gradient(#f2f2f2, #cfcfcf);
    border-radius: 4px 4px 0 0;
}
.light { width: 8px; height: 8px; margin-right: 4px; border-radius: 50%; flex: none; }
.light-red { background: #e2574f; border: 1px solid #b8403a; }
.light-yellow { background: #e3a944; border: 1px solid #b88930; }
.light-green { background: #6fb84f; border: 1px solid #55943b; }
.doctitle {
    display: flex;
    align-items: center;
    margin-left: 271px;
    color: #444;
    font-size: 7.8px;
    white-space: nowrap;
}
.docicon { width: 10px; height: 10px; margin-right: 2px; }

.toprow { display: flex; flex: none; height: 10px; }
.hruler {
    display: flex;
    flex: 1;
    background:
        repeating-linear-gradient(90deg, #8a8a8a 0 1px, transparent 1px 6.58px) 0 7px / auto 3px no-repeat,
        #1f1f1f;
    overflow: hidden;
}
.rcorner { flex: none; width: 34px; }
.hcell {
    flex: none;
    width: 65.8px;
    padding: 1px 0 0 2px;
    border-left: 1px solid #888;
    color: #c4c4c4;
    font-size: 6px;
    line-height: 7px;
}
.vscroll-head {
    display: flex;
    justify-content: center;
    width: 9px;
    padding-top: 3px;
    background: #3a3a3a;
    flex: none;
}
.vscroll-head .tri { margin: 0; }

.midrow { display: flex; flex: 1; min-height: 0; }
.vruler {
    display: flex;
    flex-direction: column;
    flex: none;
    width: 10px;
    padding-top: 5px;
    background:
        repeating-linear-gradient(180deg, #8a8a8a 0 1px, transparent 1px 6.58px) right 0 top 5px / 3px 100% no-repeat,
        #1f1f1f;
    overflow: hidden;
}
.vcell {
    display: block;
    flex: none;
    height: 65.8px;
    border-top: 1px solid #888;
    color: #c4c4c4;
    font-size: 6px;
}
.vcell b {
    display: block;
    font-weight: normal;
    line-height: 7px;
    writing-mode: vertical-rl;
    transform: rotate(180deg);
    padding-bottom: 2px;
}

/* canvas and page */
.canvas {
    position: relative;
    flex: 1;
    background: #666;
    overflow: hidden;
}
.page {
    display: flex;
    flex-direction: column;
    width: 275px;
    height: 389px;
    margin: 5px 0 0 231px;
    padding: 16px 0 0 15px;
    background: #fff;
    border-top: 1px solid #aaa;
    border-left: 1px solid #222;
    border-right: 2px solid #000;
    border-bottom: 2px solid #000;
}
.frame { position: relative; flex: none; width: 242px; border: 1px solid #6ea2ff; }
.frame-teal { height: 9px; background: #2fae96; }
.frame-cream { height: 34px; background: #fdf3d3; }
.frame-dark { height: 129px; background: #324e5d; }
.frame-pink {
    flex: none;
    width: 242px;
    height: 63px;
    border: 1px solid #f07cf5;
    border-top: 0;
}
.spacer { position: relative; flex: none; width: 242px; border-left: 1px solid #bcd3ff; border-right: 1px solid #bcd3ff; }
.spacer-1 { height: 83px; }
.spacer-2 { height: 38px; }

.inner {
    position: absolute;
    left: 25px;
    width: 190px;
    color: #111;
    font-family: "Liberation Serif", serif;
    white-space: nowrap;
}
.inner-teal {
    top: -1px;
    height: 9px;
    border-right: 1px solid #8fd4c6;
    font-size: 6.3px;
    font-weight: bold;
    letter-spacing: -.33px;
    line-height: 9px;
}
.inner-cream {
    top: 5px;
    height: 21px;
    border: 1px solid #b8cdee;
    font-size: 6.2px;
    font-weight: bold;
    letter-spacing: -.33px;
    line-height: 4px;
}
.inner-dark {
    top: 5px;
    height: 118px;
    border: 1px solid #7f9fc4;
    color: #0b0f12;
    font-size: 6.3px;
    letter-spacing: -.08px;
    line-height: 6.65px;
}
.inner-dark p { margin: 0; }
.inner-dark p:first-child { margin-top: -1px; }

/* frame handles */
.h { position: absolute; display: block; background: #fff; border: 1px solid #6ea2ff; }
.h-sq { width: 4px; height: 4px; border-radius: 1px; }
.h-dot { width: 3px; height: 3px; background: #5e96ff; border: 0; }
.h-port { width: 6px; height: 6px; top: 1px; }
.h-in { width: 6px; height: 6px; }
.h-big { width: 6px; height: 6px; }
.h-tl { left: -3px; top: -3px; }
.h-tm { left: 119px; top: -3px; }
.h-tr { right: -3px; top: -3px; }
.h-bl { left: -3px; bottom: -3px; }
.h-bm { left: 119px; bottom: -3px; }
.h-br { right: -3px; bottom: -3px; }
.h-pl { left: -3px; }
.h-pr { right: -3px; }
.h-bl2 { left: -3px; top: 19px; border-radius: 50%; }
.h-br2 { right: -3px; top: 19px; border-radius: 50%; }
.h-cream-in { left: -3px; top: 4px; }
.h-cream-out { right: -3px; bottom: 4px; }
.h-dark-in { left: -3px; top: 4px; }
.h-dark-out { right: -3px; bottom: 4px; }

/* object styles panel */
.panel {
    position: absolute;
    left: 545px;
    top: 45px;
    display: flex;
    flex-direction: column;
    width: 131px;
    height: 123px;
    background: #484848;
    border: 1px solid #333;
    border-radius: 2px;
    box-shadow: 0 1px 2px rgba(0,0,0,.4);
    font: 6.3px "Liberation Sans", sans-serif;
    color: #c8c8c8;
}
.panel-top {
    display: flex;
    justify-content: space-between;
    flex: none;
    height: 7px;
    padding: 0 3px;
    background: #2e2e2e;
    color: #aaa;
    font-size: 4px;
    line-height: 7px;
}
.panel-tabs {
    display: flex;
    align-items: center;
    justify-content: space-between;
    flex: none;
    height: 12px;
    padding-right: 2px;
    background: #3a3a3a;
}
.panel-tab {
    display: flex;
    align-items: center;
    width: 53px;
    height: 12px;
    padding-left: 2px;
    background: #4a4a4a;
    color: #e8e8e8;
    font: bold 7.2px "DejaVu Sans", sans-serif;
    white-space: nowrap;
}
.updown { margin-right: 1px; font-weight: normal; }
.panel-menu { width: 10px; height: 6px; }
.panel-mixed {
    display: flex;
    align-items: center;
    justify-content: space-between;
    flex: none;
    height: 13px;
    padding: 0 5px 0 2px;
    border-bottom: 1px solid #333;
}
.bolt-small { width: 8px; height: 11px; color: #ddd; }
.panel-list { display: flex; flex: none; height: 75px; }
.styles { flex: 1; margin: 0; padding: 0; list-style: none; }
.styles li {
    display: flex;
    align-items: center;
    justify-content: space-between;
    height: 12.5px;
    padding: 0 4px 0 20px;
    border-bottom: 1px solid #383838;
    white-space: nowrap;
}
.styles svg { width: 8px; height: 8px; }
.panel-scroll {
    display: flex;
    flex-direction: column;
    align-items: center;
    justify-content: space-between;
    width: 8px;
    padding: 3px 0;
    background: #3a3a3a;
}
.panel-scroll .tri { margin: 0; }
.panel-foot {
    display: flex;
    align-items: center;
    flex: none;
    gap: 11px;
    height: 12px;
    padding-left: 31px;
    border-top: 1px solid #333;
}
.panel-foot svg { width: 8px; height: 8px; }
.pf-folder { color: #bbb; }
.panel-grip {
    display: flex;
    justify-content: center;
    flex: none;
    height: 4px;
    background: #3a3a3a;
}
.panel-grip span { width: 12px; height: 2px; background: #222; }

/* scrollbars */
.vscroll {
    display: flex;
    flex-direction: column;
    align-items: center;
    flex: none;
    width: 9px;
    padding-top: 40px;
    background: #3a3a3a;
}
.vthumb {
    width: 100%;
    height: 315px;
    background: linear-gradient(90deg, #777, #999 30%);
}
.tri-vend { margin: auto 0 3px; }

/* status bar */
.status {
    display: flex;
    align-items: center;
    flex: none;
    height: 11px;
    background: #454545;
    border-bottom: 1px solid #222;
    color: #b4b4b4;
    font: 6.8px "Liberation Sans", sans-serif;
}
.st-preview { width: 12px; height: 8px; margin-left: 11px; }
.st-nav { width: 9px; color: #777; font-size: 6px; text-align: center; }
.st-nav:first-of-type { margin-left: 4px; }
.st-page { margin-left: 3px; width: 4px; }
.tri-page { margin: 0 6px 0 46px; }
.st-clock { width: 9px; height: 9px; margin-left: 2px; }
.st-prof { margin-left: 5px; width: 64px; white-space: nowrap; }
.tri-prof { margin-left: 0; }
.st-dot { width: 7px; height: 7px; margin-left: 4px; border-radius: 50%; background: #4cb648; }
.st-err { margin-left: 3px; width: 39px; white-space: nowrap; }
.tri-err { margin-left: 0; }
.hscroll {
    display: flex;
    flex: 1;
    align-items: center;
    height: 10px;
    margin-left: 2px;
    background: #333;
}
.st-left { width: 138px; padding-left: 2px; color: #ddd; font-size: 6px; }
.hthumb { width: 290px; height: 9px; background: #999; }
.st-right { margin-left: 22px; color: #ddd; font-size: 6px; }
.st-split { width: 8px; height: 7px; margin-left: 2px; }
.st-resize {
    flex: none;
    width: 8px;
    height: 9px;
    margin-left: 1px;
    background: linear-gradient(135deg, transparent 50%, #777 50%);
}

/* dock, right */
.dock {
    display: flex;
    flex-direction: column;
    align-self: flex-start;
    flex: none;
    width: 23px;
    margin-left: 1px;
    background: #484848;
}
.dock-head {
    height: 7px;
    padding-right: 1px;
    background: #2e2e2e;
    color: #aaa;
    font-size: 4px;
    line-height: 7px;
    text-align: right;
}
.dock-group {
    display: flex;
    flex-direction: column;
    align-items: center;
    gap: 5px;
    padding: 2px 0 3px;
    border-bottom: 1px solid #2e2e2e;
}
.dock-g1 { padding-top: 10px; }
.dock-g4 { gap: 3px; padding-bottom: 8px; }
.dock-group svg { width: 12px; height: 12px; color: #dcdcdc; }
.dock-bar { width: 13px; height: 3px; margin-bottom: 1px; background: #2a2a2a; }
```
